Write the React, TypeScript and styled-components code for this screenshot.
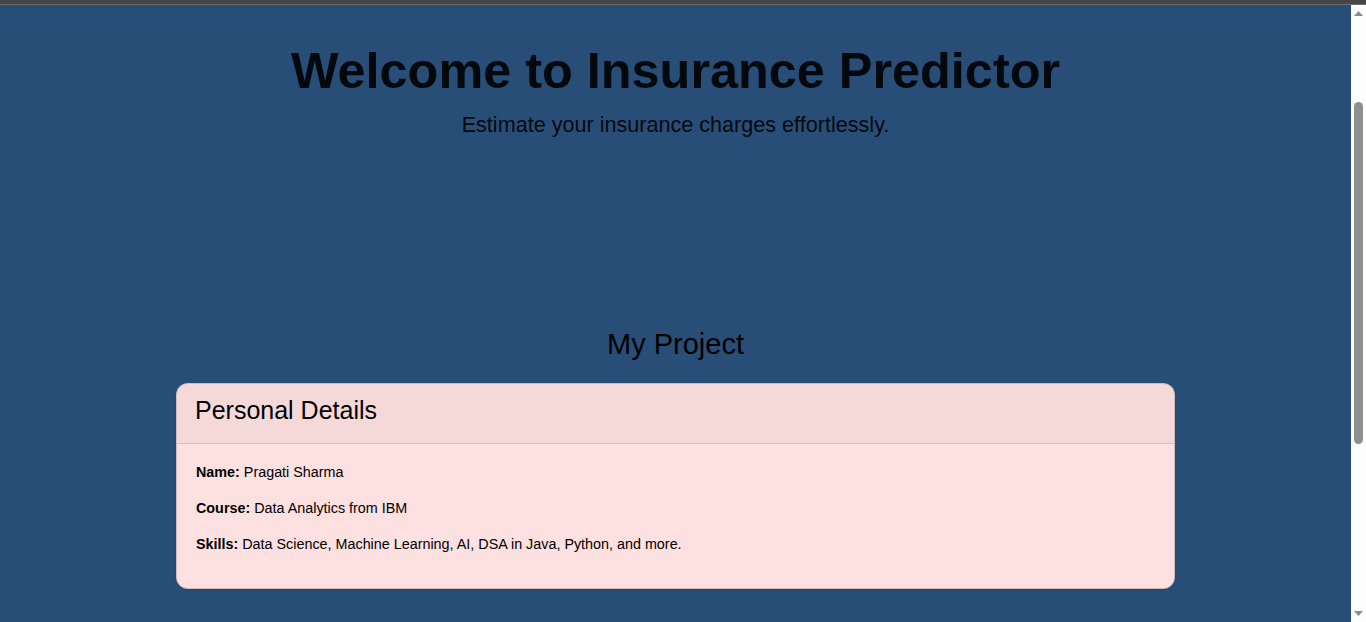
import React from "react";
import styled, { createGlobalStyle } from "styled-components";

const GlobalStyle = createGlobalStyle`
  html, body {
    margin: 0;
    padding: 0;
    height: 100%;
    overflow: hidden;
    background: #284e77;
    font-family: "Liberation Sans", Arial, Helvetica, sans-serif;
  }
  #root { height: 100%; }
  * { box-sizing: border-box; }
`;

const Frame = styled.div`
  display: flex;
  flex-direction: column;
  height: 622px;
`;

const ChromeBar = styled.div`
  height: 5px;
  flex: 0 0 5px;
  background: #464646;
  border-bottom: 1px solid #6c6c6c;
`;

const Window = styled.div`
  flex: 1;
  display: flex;
  min-height: 0;
`;

const Viewport = styled.main`
  flex: 1;
  min-width: 0;
  overflow: hidden;
  background: #284e77;
  color: #000;
`;

const Hero = styled.header`
  padding-top: 38px;
  text-align: center;
`;

const Title = styled.h1`
  margin: 0;
  font-size: 50.4px;
  line-height: 55px;
  font-weight: 700;
  color: #03080d;
`;

const Subtitle = styled.p`
  margin: 15px 0 0;
  font-size: 21.6px;
  line-height: 23px;
  color: #05090e;
`;

const FormArea = styled.section`
  height: 191px;
`;

const Project = styled.section`
  display: flex;
  flex-direction: column;
  align-items: center;
  gap: 22px;
`;

const SectionTitle = styled.h2`
  margin: 0;
  font-size: 29px;
  line-height: 34px;
  font-weight: 400;
  color: #000;
`;

const Card = styled.article`
  width: 999px;
  background: #fde1e1;
  border: 1px solid rgba(0, 0, 0, 0.16);
  border-radius: 12px;
  overflow: hidden;
  box-shadow: 0 1px 2px rgba(0, 0, 0, 0.12);
`;

const CardHeader = styled.div`
  padding: 11px 18px 18px;
  background: rgba(0, 0, 0, 0.03);
  border-bottom: 1px solid rgba(0, 0, 0, 0.125);
`;

const CardTitle = styled.h3`
  margin: 0;
  font-size: 25px;
  line-height: 30px;
  font-weight: 400;
  color: #000;
`;

const CardBody = styled.div`
  padding: 18px 19px 18px;
`;

const Detail = styled.p`
  margin: 0 0 16px;
  font-size: 14.35px;
  line-height: 20px;
  color: #000;
`;

const Label = styled.strong`
  font-weight: 700;
`;

const Rail = styled.div`
  flex: 0 0 15px;
  width: 15px;
  background: #fdfdfd;
  display: flex;
  flex-direction: column;
`;

const RailButton = styled.div<{ $h: number }>`
  flex: 0 0 ${(p) => p.$h}px;
  display: flex;
  align-items: center;
  justify-content: center;
`;

const Track = styled.div`
  flex: 1;
  display: flex;
  justify-content: center;
`;

const Thumb = styled.div`
  width: 9px;
  border-radius: 5px;
  background: #8f8f8f;
`;

const Arrow = ({ down }: { down?: boolean }) => (
  <svg width="9" height="5" viewBox="0 0 9 5">
    {down ? (
      <polygon points="0,0 9,0 4.5,5" fill="#8a8a8a" />
    ) : (
      <polygon points="4.5,0 9,5 0,5" fill="#8a8a8a" />
    )}
  </svg>
);

const details = [
  { label: "Name:", value: "Pragati Sharma" },
  { label: "Course:", value: "Data Analytics from IBM" },
  { label: "Skills:", value: "Data Science, Machine Learning, AI, DSA in Java, Python, and more." },
];

export default function App() {
  return (
    <>
      <GlobalStyle />
      <Frame>
        <ChromeBar />
        <Window>
          <Viewport>
            <Hero>
              <Title>Welcome to Insurance Predictor</Title>
              <Subtitle>Estimate your insurance charges effortlessly.</Subtitle>
            </Hero>
            <FormArea />
            <Project>
              <SectionTitle>My Project</SectionTitle>
              <Card>
                <CardHeader>
                  <CardTitle>Personal Details</CardTitle>
                </CardHeader>
                <CardBody>
                  {details.map((d) => (
                    <Detail key={d.label}>
                      <Label>{d.label}</Label> {d.value}
                    </Detail>
                  ))}
                </CardBody>
              </Card>
            </Project>
          </Viewport>
          <Rail>
            <RailButton $h={17}>
              <Arrow />
            </RailButton>
            <Track>
              <Thumb style={{ marginTop: 80, height: 342 }} />
            </Track>
            <RailButton $h={17}>
              <Arrow down />
            </RailButton>
          </Rail>
        </Window>
      </Frame>
    </>
  );
}
